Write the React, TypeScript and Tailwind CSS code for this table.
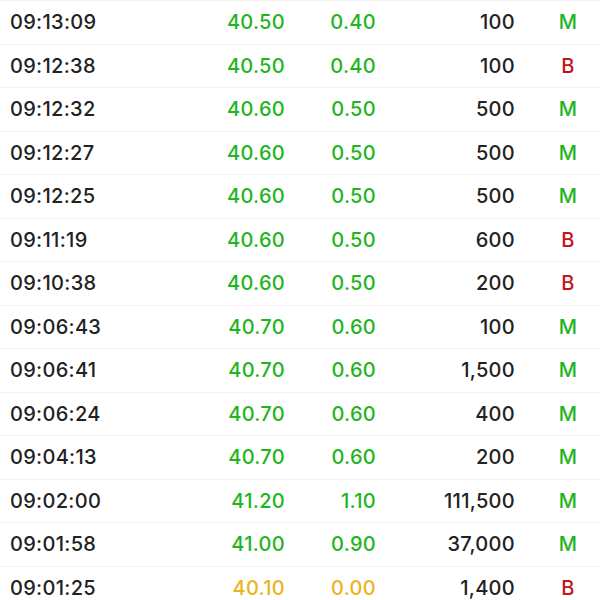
import React from "react";

type Row = { t: string; p: string; c: string; v: string; f: "M" | "B"; y?: boolean };

const rows: Row[] = [
  { t: "09:13:09", p: "40.50", c: "0.40", v: "100", f: "M" },
  { t: "09:12:38", p: "40.50", c: "0.40", v: "100", f: "B" },
  { t: "09:12:32", p: "40.60", c: "0.50", v: "500", f: "M" },
  { t: "09:12:27", p: "40.60", c: "0.50", v: "500", f: "M" },
  { t: "09:12:25", p: "40.60", c: "0.50", v: "500", f: "M" },
  { t: "09:11:19", p: "40.60", c: "0.50", v: "600", f: "B" },
  { t: "09:10:38", p: "40.60", c: "0.50", v: "200", f: "B" },
  { t: "09:06:43", p: "40.70", c: "0.60", v: "100", f: "M" },
  { t: "09:06:41", p: "40.70", c: "0.60", v: "1,500", f: "M" },
  { t: "09:06:24", p: "40.70", c: "0.60", v: "400", f: "M" },
  { t: "09:04:13", p: "40.70", c: "0.60", v: "200", f: "M" },
  { t: "09:02:00", p: "41.20", c: "1.10", v: "111,500", f: "M" },
  { t: "09:01:58", p: "41.00", c: "0.90", v: "37,000", f: "M" },
  { t: "09:01:25", p: "40.10", c: "0.00", v: "1,400", f: "B", y: true },
];

export default function App() {
  return (
    <div
      className="w-[600px] h-[600px] overflow-hidden bg-white border-t border-[#f2f2f2] text-[20px] font-medium tracking-[0.3px]"
      style={{ fontFamily: "Inter, 'Liberation Sans', sans-serif" }}
    >
      {rows.map((r, i) => {
        const col = r.y ? "text-[#eab41c]" : "text-[#1fb521]";
        return (
          <div key={i} className="flex items-center h-[43.5px] border-b border-[#f2f2f2]">
            <div className="w-[150px] shrink-0 pl-[10px] text-[#222222]">{r.t}</div>
            <div className={`w-[135px] shrink-0 text-right ${col}`}>{r.p}</div>
            <div className={`w-[91px] shrink-0 text-right ${col}`}>{r.c}</div>
            <div className="w-[139px] shrink-0 text-right text-[#222222]">{r.v}</div>
            <div className={`flex-1 pl-[21px] text-center ${r.f === "M" ? "text-[#1fb521]" : "text-[#c4151c]"}`}>{r.f}</div>
          </div>
        );
      })}
    </div>
  );
}
